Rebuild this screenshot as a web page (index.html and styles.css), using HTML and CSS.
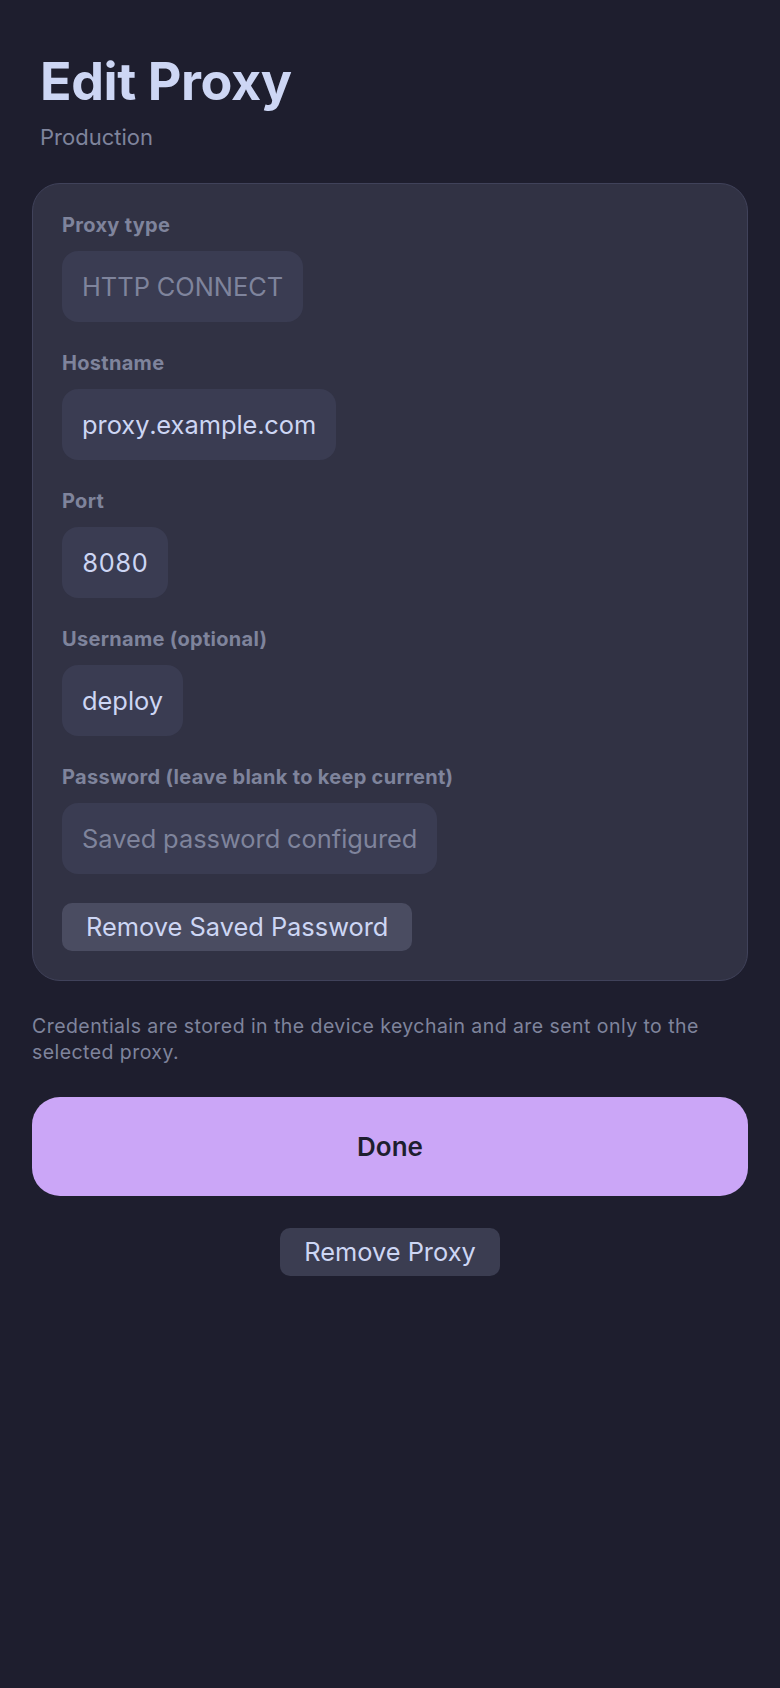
FILE: index.html
```html
<!DOCTYPE html>
<html lang="en">
<head>
<meta charset="utf-8">
<title>Edit Proxy</title>
<link rel="stylesheet" href="styles.css">
</head>
<body>
<main class="page">
  <header class="header">
    <h1 class="title">Edit Proxy</h1>
    <p class="subtitle">Production</p>
  </header>

  <section class="card">
    <div class="field">
      <label class="label">Proxy type</label>
      <span class="input placeholder">HTTP CONNECT</span>
    </div>
    <div class="field">
      <label class="label">Hostname</label>
      <span class="input">proxy.example.com</span>
    </div>
    <div class="field">
      <label class="label">Port</label>
      <span class="input">8080</span>
    </div>
    <div class="field">
      <label class="label">Username (optional)</label>
      <span class="input">deploy</span>
    </div>
    <div class="field">
      <label class="label">Password (leave blank to keep current)</label>
      <span class="input placeholder">Saved password configured</span>
    </div>
    <div class="field">
      <button class="btn-secondary btn-incard" type="button">Remove Saved Password</button>
    </div>
  </section>

  <p class="note">Credentials are stored in the device keychain and are sent only to the selected proxy.</p>

  <button class="btn-primary" type="button">Done</button>

  <div class="center">
    <button class="btn-secondary" type="button">Remove Proxy</button>
  </div>
</main>
</body>
</html>
```

FILE: styles.css
```css
html, body {
  margin: 0;
  padding: 0;
  background: #1e1e2e;
}

body {
  font-family: Inter, "Noto Sans", "Liberation Sans", sans-serif;
  color: #cdd6f4;
  min-height: 1688px;
}

.page {
  display: flex;
  flex-direction: column;
  gap: 32px;
  padding: 51px 32px 40px;
}

.header {
  display: flex;
  flex-direction: column;
  gap: 10px;
  padding: 0 8px;
}

.title {
  margin: 0;
  font-size: 52px;
  line-height: 62px;
  font-weight: 700;
  color: #cdd6f4;
  letter-spacing: -0.4px;
}

.subtitle {
  margin: 0;
  font-size: 22px;
  line-height: 28px;
  color: #7f849c;
}

.card {
  display: flex;
  flex-direction: column;
  gap: 29px;
  padding: 29px;
  background: #313244;
  border: 1px solid #40425a;
  border-radius: 28px;
}

.field {
  display: flex;
  flex-direction: column;
  align-items: flex-start;
  gap: 14px;
}

.label {
  font-size: 20px;
  line-height: 24px;
  font-weight: 700;
  letter-spacing: 0.3px;
  color: #7f849c;
}

.input {
  display: inline-block;
  padding: 20px;
  font-size: 25.4px;
  line-height: 31px;
  font-variant-numeric: tabular-nums;
  background: #3a3c52;
  border-radius: 16px;
  color: #cdd6f4;
}

.input.placeholder {
  color: #7f849c;
}

.btn-secondary {
  font-family: inherit;
  font-size: 25.4px;
  line-height: 32px;
  padding: 8px 24px;
  border: none;
  border-radius: 10px;
  background: #3b3d51;
  color: #cdd6f4;
}

.btn-incard {
  background: #4a4c61;
}

.note {
  margin: 0;
  font-size: 19.5px;
  line-height: 26px;
  letter-spacing: 0.44px;
  color: #7f849c;
}

.btn-primary {
  font-family: inherit;
  height: 99px;
  border: none;
  border-radius: 28px;
  background: #cba6f7;
  color: #1e1e2e;
  font-size: 26px;
  font-weight: 600;
}

.center {
  display: flex;
  justify-content: center;
}
```
